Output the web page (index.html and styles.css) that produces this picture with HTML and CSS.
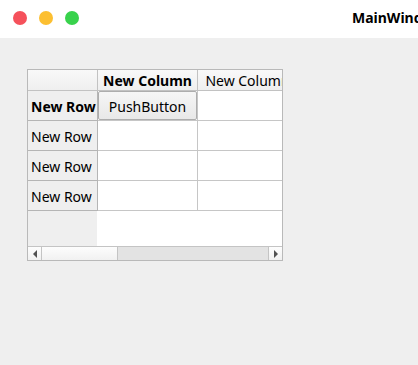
FILE: index.html
```html
<!DOCTYPE html>
<html>
<head>
  <title>MainWindow</title>
  <link rel="stylesheet" href="styles.css">
</head>
<body>
  <div class="titlebar">
    <span class="light red"></span>
    <span class="light yellow"></span>
    <span class="light green"></span>
    <span class="title">MainWindow</span>
  </div>
  <div class="central">
    <div class="table-widget">
      <div class="viewport">
        <div class="grid">
          <div class="cell head corner"></div>
          <div class="cell head bold">New Column</div>
          <div class="cell head">New Column</div>

          <div class="cell rowhead bold">New Row</div>
          <div class="cell button-cell"><button class="push">PushButton</button></div>
          <div class="cell"></div>

          <div class="cell rowhead">New Row</div>
          <div class="cell"></div>
          <div class="cell"></div>

          <div class="cell rowhead">New Row</div>
          <div class="cell"></div>
          <div class="cell"></div>

          <div class="cell rowhead">New Row</div>
          <div class="cell"></div>
          <div class="cell"></div>
        </div>
      </div>
      <div class="hscroll">
        <div class="arrow-btn left"><span class="tri-left"></span></div>
        <div class="thumb"></div>
        <div class="trough"></div>
        <div class="arrow-btn right"><span class="tri-right"></span></div>
      </div>
    </div>
  </div>
</body>
</html>
```

FILE: styles.css
```css
* {
  box-sizing: border-box;
}
body {
  margin: 0;
  width: 418px;
  height: 365px;
  overflow: hidden;
  background-color: #efefef;
  font-family: "Noto Sans", "DejaVu Sans", sans-serif;
  font-size: 14px;
  color: #000;
}
.titlebar {
  height: 38px;
  background-color: #fff;
  display: flex;
  align-items: center;
  padding-left: 13px;
  gap: 12px;
  position: relative;
  overflow: hidden;
}
.light {
  width: 14px;
  height: 14px;
  border-radius: 50%;
  margin-top: -3px;
}
.red { background-color: #f5515b; }
.yellow { background-color: #fcbf31; }
.green { background-color: #38d24c; }
.title {
  position: absolute;
  left: 352px;
  top: 8px;
  font-weight: bold;
  font-size: 14px;
  white-space: nowrap;
}
.central {
  padding: 31px 0 0 27px;
}
.table-widget {
  width: 256px;
  height: 192px;
  border: 1px solid #b9b9b9;
  background-color: #fff;
  display: flex;
  flex-direction: column;
}
.viewport {
  height: 176px;
  overflow: hidden;
  background: linear-gradient(to right, #efefef 69px, #fff 69px);
}
.grid {
  display: grid;
  grid-template-columns: 70px 100px 100px;
  grid-template-rows: 21px 30px 30px 30px 30px;
  width: 270px;
}
.cell {
  border-right: 1px solid #c6c6c6;
  border-bottom: 1px solid #c6c6c6;
  background-color: #fff;
  white-space: nowrap;
  overflow: hidden;
}
.head {
  background: linear-gradient(#f9f9f9, #efefef);
  border-color: #c2c2c2;
  text-align: center;
  padding-top: 1px;
  line-height: 20px;
}
.rowhead {
  background-color: #efefef;
  border-color: #b5b5b5;
  padding: 1px 0 0 3px;
  line-height: 29px;
}
.bold {
  font-weight: bold;
}
.button-cell {
  padding: 0;
}
.push {
  display: block;
  width: 99px;
  height: 29px;
  margin: 0;
  padding: 1px 0 0;
  border: 1px solid #adadad;
  border-radius: 2px;
  background: linear-gradient(#f6f6f6, #e8e8e8);
  font-family: inherit;
  font-size: 14px;
  color: #000;
}
.hscroll {
  height: 14px;
  border-top: 1px solid #c4c4c4;
  display: flex;
}
.arrow-btn {
  width: 14px;
  background: linear-gradient(#fdfdfd, #f0f0f0);
  display: flex;
  align-items: center;
  justify-content: center;
}
.arrow-btn.left {
  border-right: 1px solid #c4c4c4;
}
.arrow-btn.right {
  border-left: 1px solid #c4c4c4;
}
.thumb {
  width: 76px;
  background: linear-gradient(#fdfdfd, #f1f1f1);
  border-right: 1px solid #c4c4c4;
}
.trough {
  flex: 1;
  background-color: #e3e3e3;
}
.tri-left {
  width: 0;
  height: 0;
  border-top: 4px solid transparent;
  border-bottom: 4px solid transparent;
  border-right: 4px solid #505050;
}
.tri-right {
  width: 0;
  height: 0;
  border-top: 4px solid transparent;
  border-bottom: 4px solid transparent;
  border-left: 4px solid #505050;
}
```
